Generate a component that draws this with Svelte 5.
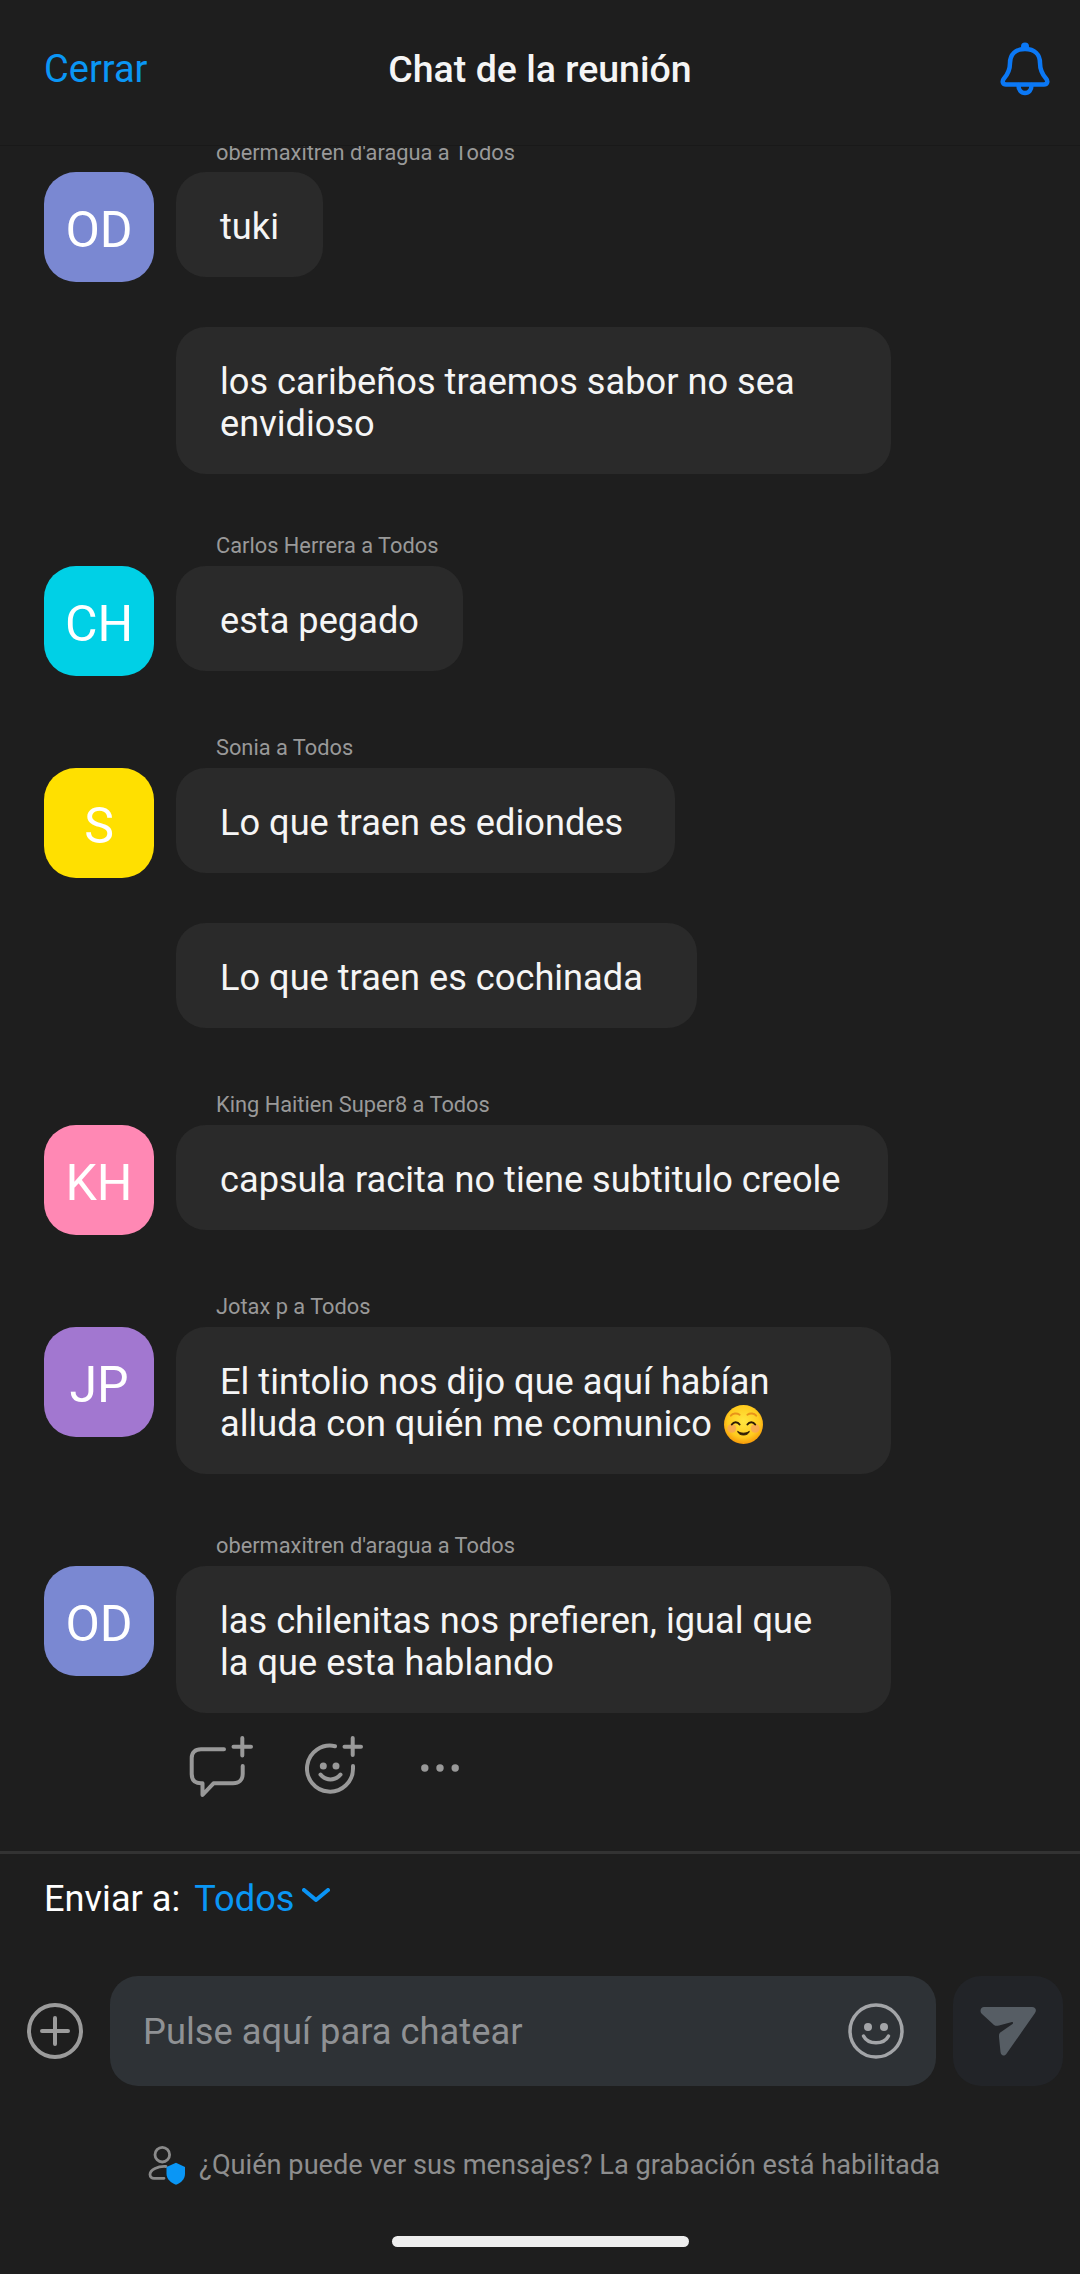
<script lang="ts">
  interface Message {
    text: string;
    emoji?: boolean;
    width?: number;
  }
  interface Group {
    sender: string;
    initials: string;
    color: string;
    messages: Message[];
    actions?: boolean;
  }

  const groups: Group[] = [
    {
      sender: "obermaxitren d'aragua a Todos",
      initials: 'OD',
      color: '#7a88d2',
      messages: [{ text: 'tuki' }, { text: 'los caribeños traemos sabor no sea envidioso' }]
    },
    {
      sender: 'Carlos Herrera a Todos',
      initials: 'CH',
      color: '#00d0e6',
      messages: [{ text: 'esta pegado' }]
    },
    {
      sender: 'Sonia a Todos',
      initials: 'S',
      color: '#ffe000',
      messages: [
        { text: 'Lo que traen es ediondes', width: 499 },
        { text: 'Lo que traen es cochinada', width: 521 }
      ]
    },
    {
      sender: 'King Haitien Super8 a Todos',
      initials: 'KH',
      color: '#ff88b4',
      messages: [{ text: 'capsula racita no tiene subtitulo creole', width: 712 }]
    },
    {
      sender: 'Jotax p a Todos',
      initials: 'JP',
      color: '#a277d0',
      messages: [{ text: 'El tintolio nos dijo que aquí habían alluda con quién me comunico', emoji: true }]
    },
    {
      sender: "obermaxitren d'aragua a Todos",
      initials: 'OD',
      color: '#7a88d2',
      messages: [{ text: 'las chilenitas nos prefieren, igual que la que esta hablando' }],
      actions: true
    }
  ];
</script>

<div class="page">
  <header class="header">
    <span class="close">Cerrar</span>
    <h1 class="title">Chat de la reunión</h1>
    <svg class="bell" viewBox="0 0 50 54" fill="none" stroke="#0b78f5" stroke-width="4.500" stroke-linejoin="round" stroke-linecap="round">
      <circle cx="25" cy="4.500" r="4" fill="#0b78f5" stroke="none" />
      <path d="M25 7C15.500 7 10 12.500 10 21c0 7-2 11-6 15.500-2.500 3-1 6 2 6h38c3 0 4.500-3 2-6-4-4.500-6-8.500-6-15.500 0-8.500-5.500-14-15-14z" />
      <path d="M18.500 43c0 5 2.500 8 6.500 8s6.500-3 6.500-8" />
    </svg>
  </header>

  <main class="list">
    {#each groups as group, g}
      <section class="group" class:first={g === 0}>
        <div class="sender">{group.sender}</div>
        {#each group.messages as message, i}
          <div class="row">
            {#if i === 0}
              <div class="avatar" style:background={group.color}>{group.initials}</div>
            {:else}
              <div class="avatar-gap"></div>
            {/if}
            <div class="bubble" style:width={message.width ? `${message.width}px` : null}>
              {message.text}
              {#if message.emoji}
                <svg class="emoji" viewBox="0 0 40 40">
                  <defs>
                    <radialGradient id="face" cx="50%" cy="42%" r="58%">
                      <stop offset="0%" stop-color="#ffe640" />
                      <stop offset="70%" stop-color="#ffcb1f" />
                      <stop offset="100%" stop-color="#f79a0a" />
                    </radialGradient>
                  </defs>
                  <circle cx="20" cy="20" r="20" fill="url(#face)" />
                  <circle cx="8" cy="24" r="4.500" fill="#f7a05c" opacity="0.75" />
                  <circle cx="32" cy="24" r="4.500" fill="#f7a05c" opacity="0.75" />
                  <path d="M7 11c2-2.500 6-3 9-1M24 10c3-2 7-1.500 9 1" fill="none" stroke="#e8931a" stroke-width="2" stroke-linecap="round" />
                  <path d="M8 20c2-3 6-3 8 0M24 20c2-3 6-3 8 0" fill="none" stroke="#2d1c05" stroke-width="2" stroke-linecap="round" />
                  <path d="M14 27c3 2.500 9 2.500 12 0-1 5-11 5-12 0z" fill="#2d1c05" stroke="#2d1c05" stroke-width="1" stroke-linejoin="round" />
                </svg>
              {/if}
            </div>
          </div>
        {/each}
        {#if group.actions}
          <div class="actions">
            <svg class="action-icon" viewBox="0 0 64 64" fill="none" stroke="#999" stroke-width="4" stroke-linecap="round" stroke-linejoin="round">
              <path d="M35 13.300H12C6 13.300 2.700 16.500 2.700 22v16c0 6 3.300 9.300 9.300 9.300h1.500V59l11-11.700H44c6 0 9.700-3.300 9.700-9.300v-8" />
              <path d="M53.300 2v17.500M44.500 10.700H62" />
            </svg>
            <svg class="action-icon" viewBox="0 0 64 64" fill="none" stroke="#999" stroke-width="4" stroke-linecap="round" stroke-linejoin="round">
              <path d="M30 10.200A23 23 0 1 0 48 32.700V30" />
              <path d="M47.700 2v17M39.500 10.700h16.500" />
              <path d="M15.500 38.500c5 6.500 15 6.500 20 0" />
              <circle cx="18.300" cy="30" r="3.500" fill="#999" stroke="none" />
              <circle cx="31" cy="30" r="3.500" fill="#999" stroke="none" />
            </svg>
            <svg class="action-dots" viewBox="0 0 38 8" fill="#999">
              <circle cx="3.800" cy="4" r="3.700" />
              <circle cx="19" cy="4" r="3.700" />
              <circle cx="34.200" cy="4" r="3.700" />
            </svg>
          </div>
        {/if}
      </section>
    {/each}
  </main>

  <footer class="composer">
    <div class="send-to">
      <span>Enviar a:</span>
      <span class="target">Todos</span>
      <svg class="chevron" viewBox="0 0 28 14" fill="none" stroke="#0a94f5" stroke-width="4" stroke-linecap="round" stroke-linejoin="round">
        <path d="M2 2l12 10L26 2" />
      </svg>
    </div>
    <div class="input-row">
      <svg class="plus" viewBox="0 0 56 56" fill="none" stroke="#9b9b9b" stroke-width="4" stroke-linecap="round">
        <circle cx="28" cy="28" r="26" />
        <path d="M28 15v26M15 28h26" />
      </svg>
      <div class="input">
        <span class="placeholder">Pulse aquí para chatear</span>
        <svg class="smile" viewBox="0 0 56 56" fill="none" stroke="#a3a5a8" stroke-width="3.500" stroke-linecap="round">
          <circle cx="28" cy="28" r="26" />
          <path d="M15.500 33c4.500 9 20.500 9 25 0" />
          <circle cx="20" cy="24" r="4" fill="#a3a5a8" stroke="none" />
          <circle cx="36" cy="24" r="4" fill="#a3a5a8" stroke="none" />
        </svg>
      </div>
      <div class="send">
        <svg class="send-icon" viewBox="0 0 56 49" fill="#565d64">
          <path d="M4 0h48c3.500 0 5 3 3 6L27 46c-2.500 4-6 3-6.500-1L19 30c-.2-3 .5-4 2-5l11.500-8c1-1 .5-2-.5-2l-13 3.500c-2 .5-3.500.5-5-.5L2 7C-1 4 1 0 4 0z" />
        </svg>
      </div>
    </div>
    <div class="notice">
      <svg class="notice-icon" viewBox="0 0 38 39">
        <g fill="none" stroke="#8a8a8a" stroke-width="2.800" stroke-linecap="round">
          <circle cx="14.300" cy="8.700" r="7.300" />
          <path d="M18 20.500C10 20 2 23.500 2 28.500c0 2.500 2 3.800 4 3.800h10" />
        </g>
        <path d="M28 16.700l9 4.300v7c0 5-4 9-9 10.700-5-1.700-9.500-5.700-9.500-10.700v-7z" fill="#0a96f5" />
      </svg>
      <span>¿Quién puede ver sus mensajes? La grabación está habilitada</span>
    </div>
    <div class="home-bar"></div>
  </footer>
</div>

<style>
  :global(body) {
    margin: 0;
    background: #1e1e1e;
  }

  .page {
    width: 1080px;
    height: 2274px;
    display: flex;
    flex-direction: column;
    overflow: hidden;
    background: #1e1e1e;
    color: #fff;
    font-family: Roboto, "Liberation Sans", sans-serif;
  }

  .header {
    position: relative;
    flex: 0 0 146px;
    box-sizing: border-box;
    display: flex;
    align-items: center;
    justify-content: space-between;
    padding: 0 30px 8px 44px;
    border-bottom: 1px solid #191919;
  }

  .close {
    font-size: 38px;
    color: #0a96f5;
  }

  .title {
    position: absolute;
    left: 0;
    right: 0;
    margin: 0;
    text-align: center;
    font-size: 37.5px;
    font-weight: 500;
    color: #f5f5f5;
  }

  .bell {
    width: 50px;
    height: 54px;
  }

  .list {
    flex: 1;
    min-height: 0;
    overflow: hidden;
  }

  .group {
    margin-top: 59px;
  }

  .group.first {
    margin-top: -6px;
  }

  .sender {
    padding: 0 0 7px 216px;
    font-size: 21.8px;
    line-height: 26px;
    color: #999;
  }

  .first .sender {
    padding-bottom: 6px;
  }

  .row {
    display: flex;
    align-items: flex-start;
    gap: 22px;
    min-height: 110px;
    padding-left: 44px;
  }

  .row + .row {
    margin-top: 45px;
  }

  .avatar {
    flex: 0 0 110px;
    height: 110px;
    box-sizing: border-box;
    display: flex;
    align-items: center;
    justify-content: center;
    padding-top: 5px;
    border-radius: 32px;
    font-size: 50px;
    color: #fff;
  }

  .avatar-gap {
    flex: 0 0 110px;
  }

  .bubble {
    box-sizing: border-box;
    max-width: 715px;
    padding: 34px 44px 29px;
    border-radius: 30px;
    background: #2a2a2a;
    font-size: 36.2px;
    line-height: 42px;
    color: #f5f5f5;
  }

  .emoji {
    width: 39px;
    height: 39px;
    margin-left: 3px;
    vertical-align: -8px;
  }

  .actions {
    display: flex;
    align-items: center;
    padding: 23px 0 0 189px;
  }

  .action-icon {
    width: 64px;
    height: 64px;
    margin-right: 52px;
  }

  .action-dots {
    width: 38px;
    height: 8px;
  }

  .composer {
    flex: 0 0 auto;
    border-top: 3px solid #333;
  }

  .send-to {
    display: flex;
    align-items: center;
    height: 88px;
    padding-left: 44px;
    font-size: 36.2px;
  }

  .target {
    margin-left: 14px;
    color: #0a96f5;
  }

  .chevron {
    width: 28px;
    height: 14px;
    margin: 0 0 6px 8px;
  }

  .input-row {
    display: flex;
    align-items: center;
    margin-top: 34px;
    padding-left: 27px;
  }

  .plus {
    width: 56px;
    height: 56px;
    margin-right: 27px;
  }

  .input {
    width: 826px;
    height: 110px;
    box-sizing: border-box;
    display: flex;
    align-items: center;
    justify-content: space-between;
    padding: 0 32px 0 33px;
    border-radius: 28px;
    background: #2e3236;
  }

  .placeholder {
    font-size: 36.3px;
    color: #8f9194;
  }

  .smile {
    width: 56px;
    height: 56px;
  }

  .send {
    width: 110px;
    height: 110px;
    margin-left: 17px;
    display: flex;
    align-items: center;
    justify-content: center;
    border-radius: 28px;
    background: #222428;
  }

  .send-icon {
    width: 56px;
    height: 49px;
  }

  .notice {
    display: flex;
    align-items: center;
    justify-content: center;
    gap: 13px;
    margin-top: 59px;
    padding-left: 8px;
    font-size: 27.2px;
    line-height: 40px;
    color: #8e8e8e;
  }

  .notice-icon {
    width: 38px;
    height: 39px;
  }

  .home-bar {
    width: 297px;
    height: 11px;
    margin: 51px auto 27px;
    border-radius: 6px;
    background: #eee;
  }
</style>
